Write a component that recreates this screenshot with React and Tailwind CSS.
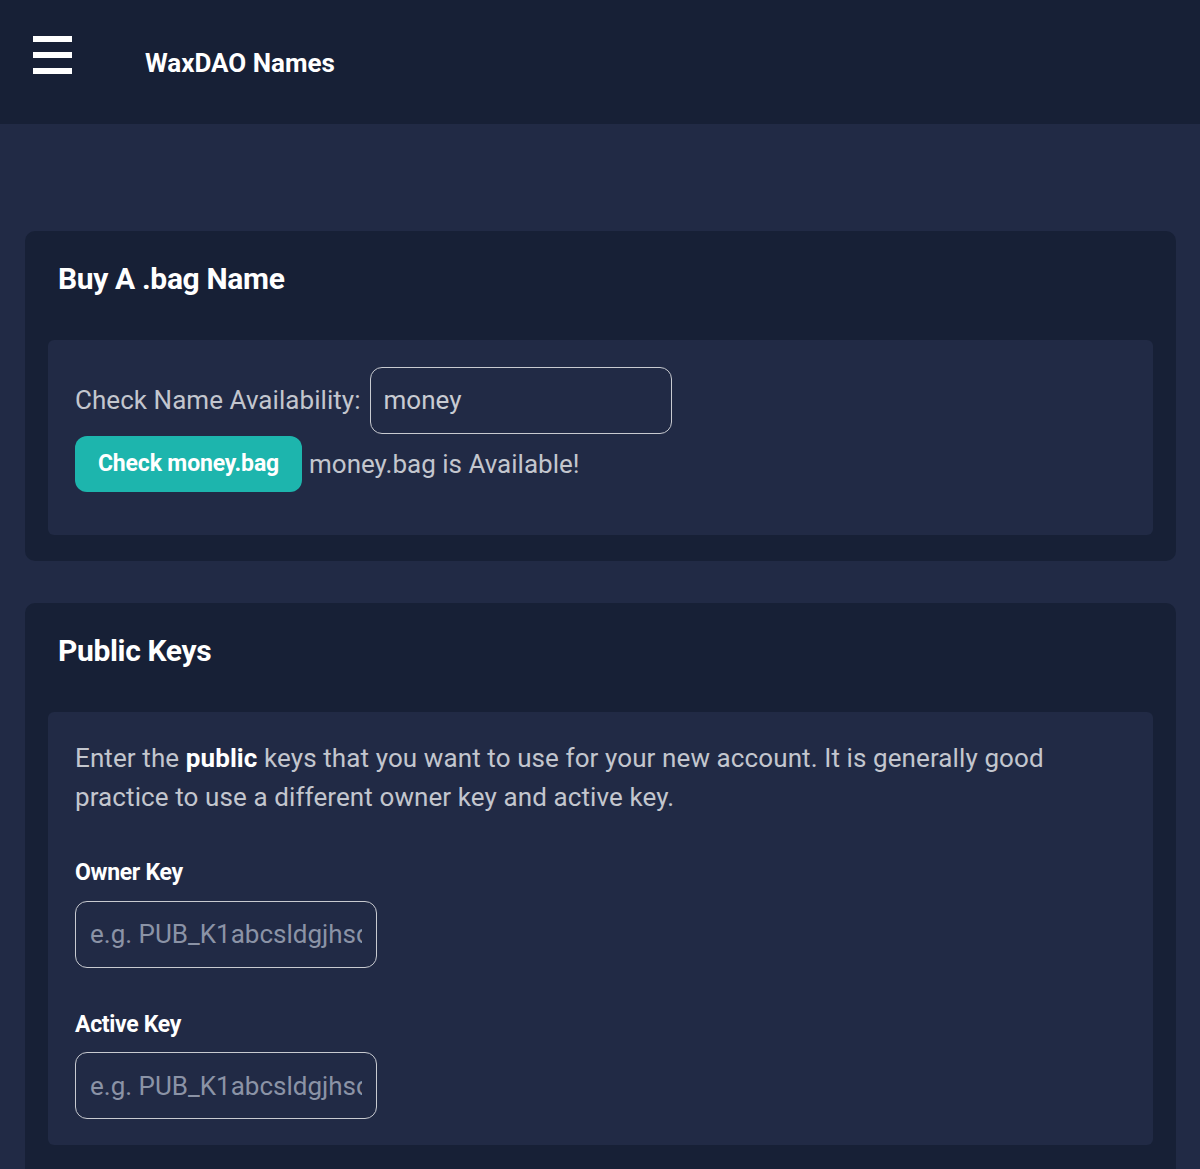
export default function App() {
  return (
    <div className="min-h-[1169px] bg-[#212a45] font-['Roboto',sans-serif] text-white">
      {/* top bar */}
      <header className="flex h-[124px] items-center bg-[#172036]">
        <button className="ml-[33px] mb-[14px] flex w-[39px] flex-col gap-[10px]" aria-label="menu">
          <span className="block h-[6px] w-full bg-white" />
          <span className="block h-[6px] w-full bg-white" />
          <span className="block h-[6px] w-full bg-white" />
        </button>
        <h1 className="ml-[73px] mt-[2px] text-[26px] font-bold">WaxDAO Names</h1>
      </header>

      <main className="px-[25px] pt-[107px] pr-[24px]">
        {/* name lookup */}
        <section className="rounded-[10px] bg-[#172036] px-[23px] pb-[26px]">
          <h2 className="pt-[30px] pl-[10px] text-[30px] font-bold leading-[36px] tracking-[-0.35px]">Buy A .bag Name</h2>
          <div className="mt-[43px] rounded-[6px] bg-[#212a45] px-[27px] pt-[27px] pb-[43px] text-[26px] text-[#c3c6ce]">
            <div className="flex items-center gap-[9px]">
              <span className="tracking-[0.05px]">Check Name Availability:</span>
              <div className="flex h-[67px] w-[302px] items-center rounded-[12px] border-[1.5px] border-[#c8cad0] px-[13px] text-[#c8cbd2]">
                money
              </div>
            </div>
            <div className="mt-[2px] flex items-center gap-[7px]">
              <button className="h-[56px] w-[227px] rounded-[12px] bg-[#1db5ad] text-[23px] font-bold tracking-[-0.15px] text-white">
                Check money.bag
              </button>
              <span>money.bag is Available!</span>
            </div>
          </div>
        </section>

        {/* key entry */}
        <section className="mt-[42px] rounded-t-[10px] bg-[#172036] px-[23px] pb-[24px]">
          <h2 className="pt-[30px] pl-[10px] text-[30px] font-bold leading-[36px] tracking-[-0.35px]">Public Keys</h2>
          <div className="mt-[43px] rounded-[6px] bg-[#212a45] px-[27px] pt-[27px] pb-[26px]">
            <p className="max-w-[1000px] text-[26px] leading-[39px] tracking-[0.1px] text-[#c3c6ce]">
              Enter the <b className="font-bold text-white">public</b> keys that you want to use for your new account. It is generally good practice to use a different owner key and active key.
            </p>
            <label className="mt-[39px] block text-[23px] font-bold tracking-[-0.3px] text-white">Owner Key</label>
            <input
              className="mt-[10px] block h-[67px] w-[302px] rounded-[12px] border-[1.5px] border-[#c8cad0] bg-transparent px-[14px] text-[26px] text-white outline-none placeholder:text-[#8b93a6]"
              placeholder="e.g. PUB_K1abcsldgjhsdg"
            />
            <label className="mt-[40px] block text-[23px] font-bold tracking-[-0.3px] text-white">Active Key</label>
            <input
              className="mt-[10px] block h-[67px] w-[302px] rounded-[12px] border-[1.5px] border-[#c8cad0] bg-transparent px-[14px] text-[26px] text-white outline-none placeholder:text-[#8b93a6]"
              placeholder="e.g. PUB_K1abcsldgjhsdg"
            />
          </div>
        </section>
      </main>
    </div>
  );
}
